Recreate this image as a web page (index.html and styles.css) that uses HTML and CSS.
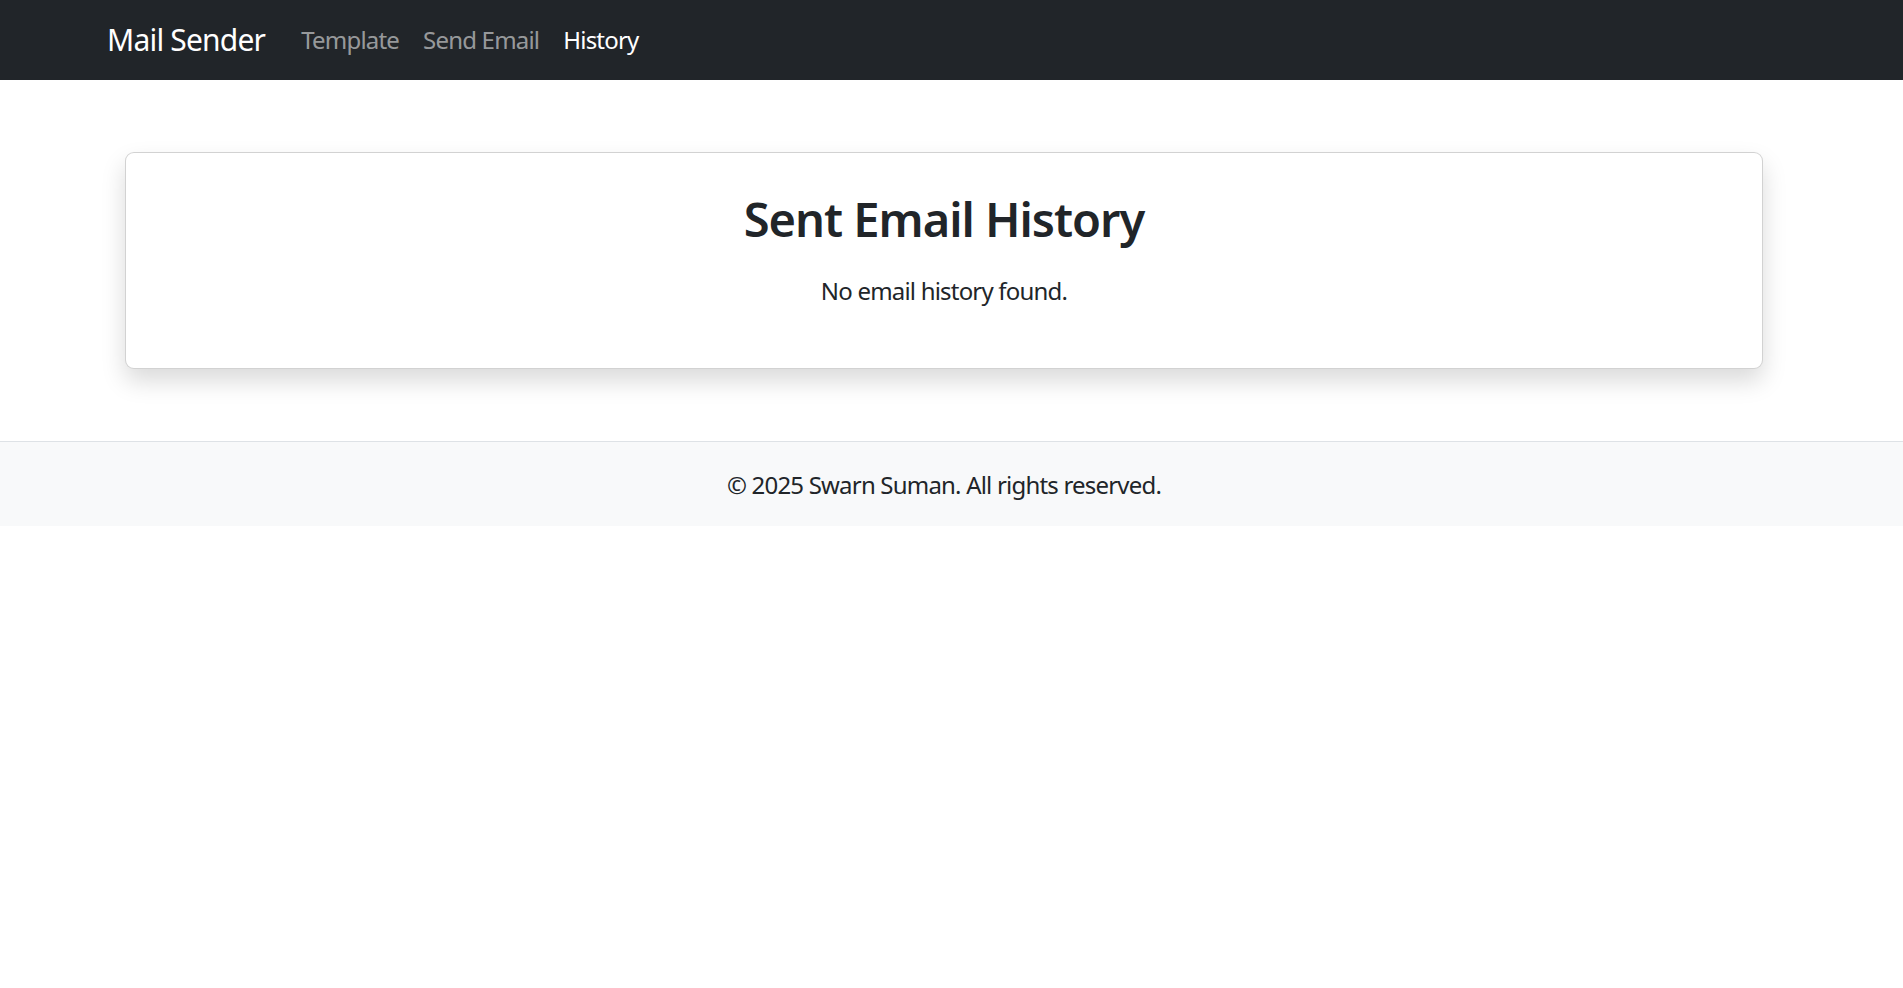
FILE: index.html
```html
<!DOCTYPE html>
<html lang="en">
<head>
<meta charset="utf-8">
<title>Mail Sender</title>
<link rel="stylesheet" href="styles.css">
</head>
<body>
<nav class="navbar">
  <div class="container nav-inner">
    <a class="brand" href="#">Mail Sender</a>
    <ul class="nav-links">
      <li><a class="nav-link" href="#">Template</a></li>
      <li><a class="nav-link" href="#">Send Email</a></li>
      <li><a class="nav-link active" href="#">History</a></li>
    </ul>
  </div>
</nav>
<main class="container main">
  <section class="card">
    <h2 class="card-title">Sent Email History</h2>
    <p class="empty">No email history found.</p>
  </section>
</main>
<footer class="footer">
  <p class="footer-text">© 2025 Swarn Suman. All rights reserved.</p>
</footer>
</body>
</html>
```

FILE: styles.css
```css
* { box-sizing: border-box; }
html, body { margin: 0; padding: 0; }
body {
  font-family: "Noto Sans", "Open Sans", sans-serif;
  color: #212529;
  background: #fff;
  font-size: 24px;
  line-height: 1.5;
  letter-spacing: -0.8px;
}
.container {
  width: 1710px;
  margin-left: calc(50% - 862.5px);
  padding: 0 18px;
}
.navbar {
  background: #212529;
  height: 80px;
  display: flex;
  align-items: center;
}
.nav-inner {
  display: flex;
  align-items: center;
}
.brand {
  color: #fff;
  text-decoration: none;
  font-size: 30px;
  line-height: 45px;
  margin-right: 24px;
  padding-bottom: 2px;
  letter-spacing: -0.8px;
}
.nav-links {
  list-style: none;
  display: flex;
  margin: 0;
  padding: 0;
}
.nav-link {
  display: block;
  padding: 0 12px;
  font-size: 24px;
  line-height: 36px;
  color: rgba(255,255,255,0.55);
  text-decoration: none;
}
.nav-link.active { color: #fff; }
.main { padding-top: 72px; padding-bottom: 72px; }
.card {
  margin: 0 18px;
  border: 1px solid rgba(0,0,0,0.175);
  border-radius: 9px;
  box-shadow: 0 12px 24px rgba(0,0,0,0.15);
  padding: 36px;
  text-align: center;
  background: #fff;
}
.card-title {
  margin: 0 0 24px;
  padding-top: 3px;
  font-size: 47px;
  line-height: 55px;
  font-weight: 600;
  letter-spacing: -1px;
}
.empty { margin: 0 0 24px; padding-top: 2px; line-height: 35px; }
.footer {
  background: #f8f9fa;
  border-top: 1px solid #dee2e6;
  padding: 24px 0;
  text-align: center;
}
.footer-text {
  margin: 0;
  width: 1888px;
  padding-top: 2px;
  line-height: 34px;
}
```
